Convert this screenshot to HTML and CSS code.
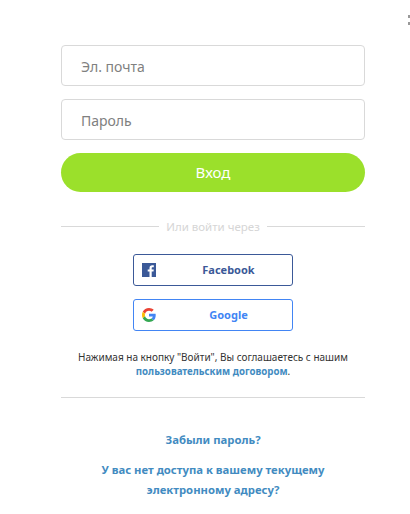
FILE: index.html
```html
<!DOCTYPE html>
<html lang="ru">
<head>
  <meta charset="UTF-8">
  <title>Вход</title>
  <link rel="stylesheet" href="styles.css">
</head>
<body>
  <div class="corner"></div>
  <div class="container">
    <div class="field">Эл. почта</div>
    <div class="field">Пароль</div>
    <div class="submit">Вход</div>

    <div class="divider"><span>Или войти через</span></div>

    <div class="social">
      <div class="social-btn fb">
        <svg class="icon" viewBox="0 0 14 14" width="14" height="14">
          <rect width="14" height="14" fill="#3b5998"/>
          <path d="M9.7 14V8.6h1.8l.3-2.1H9.700V5.200c0-.6.2-1 1-1h1.100V2.300c-.2 0-.9-.1-1.600-.1-1.600 0-2.700 1-2.700 2.800v1.500H5.700v2.100h1.800V14z" fill="#fff"/>
        </svg>
        <span>Facebook</span>
      </div>
      <div class="social-btn google">
        <svg class="icon" viewBox="0 0 48 48" width="14" height="14">
          <path fill="#ea4335" d="M24 9.500c3.500 0 6.700 1.200 9.200 3.600l6.900-6.900C35.900 2.400 30.500 0 24 0 14.600 0 6.500 5.400 2.600 13.200l8 6.200C12.400 13.700 17.700 9.500 24 9.500z"/>
          <path fill="#4285f4" d="M47 24.500c0-1.600-.1-3.100-.4-4.500H24v9h13c-.6 3-2.200 5.500-4.800 7.200l7.700 6c4.500-4.200 7.100-10.300 7.100-17.700z"/>
          <path fill="#fbbc05" d="M10.600 28.600c-.5-1.400-.8-3-.8-4.600s.3-3.200.8-4.600l-8-6.200C.900 16.500 0 20.100 0 24s.9 7.500 2.600 10.800z"/>
          <path fill="#34a853" d="M24 48c6.500 0 11.900-2.100 15.900-5.800l-7.700-6c-2.200 1.400-4.900 2.300-8.200 2.300-6.300 0-11.600-4.200-13.400-9.900l-8 6.200C6.500 42.600 14.600 48 24 48z"/>
        </svg>
        <span>Google</span>
      </div>
    </div>

    <p class="terms">Нажимая на кнопку "Войти", Вы соглашаетесь с нашим <a href="#">пользовательским договором</a>.</p>

    <div class="rule"></div>

    <div class="links">
      <a href="#">Забыли пароль?</a>
      <a href="#">У вас нет доступа к вашему текущему электронному адресу?</a>
    </div>
  </div>
</body>
</html>
```

FILE: styles.css
```css
* {
  box-sizing: border-box;
}
html, body {
  margin: 0;
  height: 100%;
  overflow: hidden;
}
body {
  background-color: #fff;
  font-family: "Noto Sans", "Open Sans", sans-serif;
  position: relative;
}
a {
  color: #428bc1;
  text-decoration: none;
  font-weight: bold;
}
.corner {
  position: absolute;
  top: 15px;
  left: 408px;
  width: 2px;
  height: 10px;
  border-top: 3px solid #999;
  border-bottom: 3px solid #999;
}
.container {
  width: 304px;
  margin-left: 61px;
  padding-top: 45px;
}
.field {
  height: 41px;
  margin-bottom: 13px;
  padding-left: 19px;
  border: 1px solid #d9d9d9;
  border-radius: 4px;
  color: #808080;
  font-size: 14px;
  line-height: 41px;
}
.submit {
  height: 39px;
  border-radius: 20px;
  background-color: #9be02b;
  color: #fff;
  font-size: 15px;
  line-height: 38px;
  text-align: center;
}
.divider {
  display: flex;
  align-items: center;
  gap: 7px;
  margin-top: 26px;
  height: 17px;
  color: #d6d6d6;
  font-size: 11.5px;
}
.divider::before,
.divider::after {
  content: "";
  flex: 1;
  height: 1px;
  background-color: #d9d9d9;
}
.social {
  display: flex;
  flex-direction: column;
  align-items: center;
  gap: 13px;
  margin-top: 19px;
}
.social-btn {
  display: flex;
  align-items: center;
  width: 160px;
  height: 32px;
  padding-left: 8px;
  border: 1px solid;
  border-radius: 3px;
  font-size: 11px;
  font-weight: bold;
}
.social-btn span {
  flex: 1;
  padding-left: 9px;
  padding-bottom: 2px;
  text-align: center;
}
.fb {
  border-color: #3b5998;
  color: #3b5998;
}
.google {
  border-color: #4285f4;
  color: #4285f4;
}
.terms {
  margin: 19px 0 0;
  color: #333;
  font-size: 10px;
  line-height: 14px;
  text-align: center;
}
.terms a {
  font-size: 9.7px;
}
.rule {
  height: 1px;
  margin-top: 18px;
  background-color: #d9d9d9;
}
.links {
  display: flex;
  flex-direction: column;
  align-items: center;
  gap: 10px;
  margin-top: 32px;
  font-size: 11.3px;
  line-height: 20px;
  text-align: center;
}
.links a {
  width: 250px;
}
```
